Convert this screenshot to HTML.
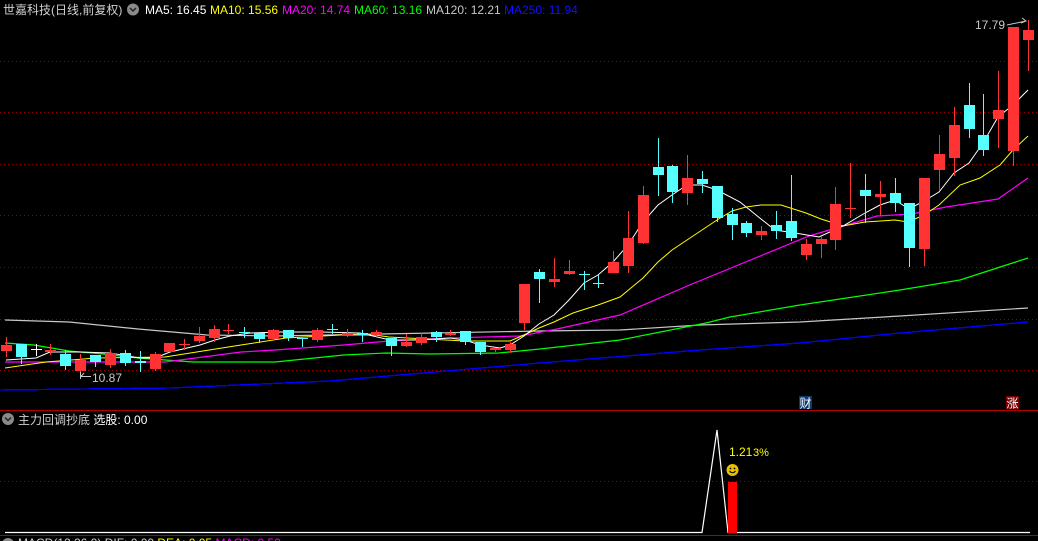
<!DOCTYPE html>
<html><head><meta charset="utf-8"><style>
html,body{margin:0;padding:0;background:#000;width:1038px;height:541px;overflow:hidden}
svg{display:block}
text{font-family:"Liberation Sans","Noto Sans CJK SC",sans-serif;font-size:12px}
</style></head><body>
<svg width="1038" height="541" viewBox="0 0 1038 541" xmlns="http://www.w3.org/2000/svg">
<g stroke="#a00000" stroke-dasharray="1,3" stroke-width="1" shape-rendering="crispEdges">
<line x1="0" y1="61.5" x2="1038" y2="61.5"/><line x1="0" y1="112.5" x2="1038" y2="112.5"/>
<line x1="0" y1="164.5" x2="1038" y2="164.5"/><line x1="0" y1="215.5" x2="1038" y2="215.5"/>
<line x1="0" y1="267.5" x2="1038" y2="267.5"/><line x1="0" y1="319.5" x2="1038" y2="319.5"/>
<line x1="0" y1="370.5" x2="1038" y2="370.5"/><line x1="0" y1="481.5" x2="1038" y2="481.5"/>
</g>
<line x1="0" y1="410.5" x2="1038" y2="410.5" stroke="#b00000"/>
<line x1="0" y1="535.5" x2="1038" y2="535.5" stroke="#b00000"/>
<!-- MA lines -->
<g fill="none" stroke-width="1.2">
<polyline stroke="#0000ff" stroke-width="1.4" shape-rendering="crispEdges" points="0,390 170,388 330,381 540,363 700,350 800,343 900,333 1028,322"/>
<polyline stroke="#c8c8c8" points="5,320 69,322 138,329 207,335 275,336 379,334 540,331 620,330 700,325 800,322 900,316 1028,308"/>
<polyline stroke="#00ff00" points="5,343 34,345 69,351 103,354 138,358 193,362 275,362 344,355 386,353 430,354 499,353 540,349 620,340 706,323 730,317 800,305 900,290 960,280 1028,258"/>
<polyline stroke="#ff00ff" points="5,362 165,362 241,352 275,350 344,345 389,341 448,338 520,336 557,329 620,315 692,284 809,236 877,216 912,214 946,207 998,199 1028,178"/>
<polyline stroke="#ffff00" stroke-width="1" points="5,368 46,362 96,358 165,357 241,345 286,338 341,335 375,335 389,337 465,341 510,341 524,335 539,328 554,322 573,313 598,305 620,297 643,278 658,262 672,250 687,240 702,230 717,220 732,211 746,207 761,205 781,205 806,213 821,219 843,226 865,222 895,220 908,222 924,215 939,205 960,185 980,178 1000,165 1013,150 1028,136"/>
<polyline stroke="#ffffff" stroke-width="1" points="6,360 36,358 50,352 80,352 110,353 140,358 155,358 170,352 200,345 215,340 230,336 250,333 280,332 320,332 360,333 390,340 420,340 450,338 465,340 480,345 500,348 510,345 524,336 539,324 554,315 569,300 584,283 598,275 613,262 628,245 643,222 658,205 672,195 687,185 702,185 717,190 740,202 761,219 775,230 795,233 819,237 843,226 865,213 880,205 895,200 909,209 924,201 939,192 954,173 969,163 983,143 998,117 1013,105 1028,90"/>
</g>
<!-- candles -->
<g shape-rendering="crispEdges">
<g fill="#ff3333" stroke="#ff3333">
<line x1="6.5" y1="337" x2="6.5" y2="357"/><rect x="1" y="345" width="11" height="6" stroke="none"/>
<line x1="50.5" y1="344" x2="50.5" y2="355"/><rect x="45" y="350" width="11" height="2" stroke="none"/>
<line x1="80.5" y1="354" x2="80.5" y2="376"/><rect x="75" y="360" width="11" height="11" stroke="none"/>
<line x1="110.5" y1="349" x2="110.5" y2="368"/><rect x="105" y="353" width="11" height="12" stroke="none"/>
<line x1="155.5" y1="352" x2="155.5" y2="371"/><rect x="150" y="354" width="11" height="15" stroke="none"/>
<line x1="169.5" y1="343" x2="169.5" y2="352"/><rect x="164" y="343" width="11" height="9" stroke="none"/>
<line x1="184.5" y1="339" x2="184.5" y2="350"/><rect x="179" y="344" width="11" height="1" stroke="none"/>
<line x1="199.5" y1="327" x2="199.5" y2="343"/><rect x="194" y="336" width="11" height="5" stroke="none"/>
<line x1="214.5" y1="325" x2="214.5" y2="342"/><rect x="209" y="329" width="11" height="9" stroke="none"/>
<line x1="228.5" y1="324" x2="228.5" y2="334"/><rect x="223" y="330" width="11" height="1" stroke="none"/>
<line x1="273.5" y1="329" x2="273.5" y2="340"/><rect x="268" y="330" width="11" height="9" stroke="none"/>
<line x1="317.5" y1="328" x2="317.5" y2="342"/><rect x="312" y="330" width="11" height="10" stroke="none"/>
<line x1="347.5" y1="329" x2="347.5" y2="337"/><rect x="342" y="333" width="11" height="3" stroke="none"/>
<line x1="376.5" y1="330" x2="376.5" y2="336"/><rect x="371" y="332" width="11" height="3" stroke="none"/>
<line x1="406.5" y1="334" x2="406.5" y2="347"/><rect x="401" y="342" width="11" height="4" stroke="none"/>
<line x1="421.5" y1="333" x2="421.5" y2="345"/><rect x="416" y="337" width="11" height="6" stroke="none"/>
<line x1="450.5" y1="330" x2="450.5" y2="336"/><rect x="445" y="333" width="11" height="2" stroke="none"/>
<line x1="495.5" y1="348" x2="495.5" y2="352"/><rect x="490" y="348" width="11" height="2" stroke="none"/>
<line x1="510.5" y1="342" x2="510.5" y2="353"/><rect x="505" y="344" width="11" height="6" stroke="none"/>
<line x1="524.5" y1="284" x2="524.5" y2="330"/><rect x="519" y="284" width="11" height="39" stroke="none"/>
<line x1="554.5" y1="258" x2="554.5" y2="287"/><rect x="549" y="279" width="11" height="3" stroke="none"/>
<line x1="569.5" y1="260" x2="569.5" y2="275"/><rect x="564" y="271" width="11" height="3" stroke="none"/>
<line x1="613.5" y1="251" x2="613.5" y2="273"/><rect x="608" y="262" width="11" height="11" stroke="none"/>
<line x1="628.5" y1="211" x2="628.5" y2="273"/><rect x="623" y="238" width="11" height="28" stroke="none"/>
<line x1="643.5" y1="186" x2="643.5" y2="244"/><rect x="638" y="195" width="11" height="48" stroke="none"/>
<line x1="687.5" y1="155" x2="687.5" y2="205"/><rect x="682" y="178" width="11" height="15" stroke="none"/>
<line x1="761.5" y1="226" x2="761.5" y2="240"/><rect x="756" y="231" width="11" height="4" stroke="none"/>
<line x1="806.5" y1="239" x2="806.5" y2="260"/><rect x="801" y="244" width="11" height="11" stroke="none"/>
<line x1="821.5" y1="236" x2="821.5" y2="258"/><rect x="816" y="239" width="11" height="5" stroke="none"/>
<line x1="835.5" y1="187" x2="835.5" y2="250"/><rect x="830" y="204" width="11" height="36" stroke="none"/>
<line x1="850.5" y1="163" x2="850.5" y2="218"/><rect x="845" y="208" width="11" height="1" stroke="none"/>
<line x1="880.5" y1="181" x2="880.5" y2="216"/><rect x="875" y="194" width="11" height="3" stroke="none"/>
<line x1="924.5" y1="178" x2="924.5" y2="266"/><rect x="919" y="178" width="11" height="71" stroke="none"/>
<line x1="939.5" y1="135" x2="939.5" y2="190"/><rect x="934" y="154" width="11" height="16" stroke="none"/>
<line x1="954.5" y1="107" x2="954.5" y2="176"/><rect x="949" y="125" width="11" height="33" stroke="none"/>
<line x1="998.5" y1="71" x2="998.5" y2="148"/><rect x="993" y="110" width="11" height="9" stroke="none"/>
<line x1="1013.5" y1="27" x2="1013.5" y2="166"/><rect x="1008" y="27" width="11" height="124" stroke="none"/>
<line x1="1028.5" y1="20" x2="1028.5" y2="71"/><rect x="1023" y="30" width="11" height="10" stroke="none"/>
</g>
<g fill="#55ffff" stroke="#55ffff">
<line x1="21.5" y1="344" x2="21.5" y2="364"/><rect x="16" y="344" width="11" height="13" stroke="none"/>
<line x1="65.5" y1="350" x2="65.5" y2="370"/><rect x="60" y="354" width="11" height="12" stroke="none"/>
<line x1="95.5" y1="355" x2="95.5" y2="367"/><rect x="90" y="355" width="11" height="7" stroke="none"/>
<line x1="125.5" y1="350" x2="125.5" y2="366"/><rect x="120" y="353" width="11" height="10" stroke="none"/>
<line x1="140.5" y1="351" x2="140.5" y2="372"/><rect x="135" y="361" width="11" height="2" stroke="none"/>
<line x1="244.5" y1="327" x2="244.5" y2="338"/><rect x="239" y="332" width="11" height="1" stroke="none"/>
<line x1="259.5" y1="333" x2="259.5" y2="343"/><rect x="254" y="333" width="11" height="6" stroke="none"/>
<line x1="288.5" y1="330" x2="288.5" y2="341"/><rect x="283" y="330" width="11" height="8" stroke="none"/>
<line x1="302.5" y1="338" x2="302.5" y2="347"/><rect x="297" y="338" width="11" height="1" stroke="none"/>
<line x1="332.5" y1="324" x2="332.5" y2="334"/><rect x="327" y="329" width="11" height="1" stroke="none"/>
<line x1="362.5" y1="330" x2="362.5" y2="342"/><rect x="357" y="333" width="11" height="2" stroke="none"/>
<line x1="391.5" y1="338" x2="391.5" y2="356"/><rect x="386" y="338" width="11" height="8" stroke="none"/>
<line x1="436.5" y1="331" x2="436.5" y2="342"/><rect x="431" y="332" width="11" height="5" stroke="none"/>
<line x1="465.5" y1="331" x2="465.5" y2="345"/><rect x="460" y="331" width="11" height="11" stroke="none"/>
<line x1="480.5" y1="342" x2="480.5" y2="355"/><rect x="475" y="342" width="11" height="10" stroke="none"/>
<line x1="539.5" y1="269" x2="539.5" y2="303"/><rect x="534" y="272" width="11" height="7" stroke="none"/>
<line x1="584.5" y1="271" x2="584.5" y2="290"/><rect x="579" y="274" width="11" height="1" stroke="none"/>
<line x1="598.5" y1="275" x2="598.5" y2="288"/><rect x="593" y="283" width="11" height="1" stroke="none"/>
<line x1="658.5" y1="138" x2="658.5" y2="196"/><rect x="653" y="167" width="11" height="8" stroke="none"/>
<line x1="672.5" y1="165" x2="672.5" y2="203"/><rect x="667" y="166" width="11" height="26" stroke="none"/>
<line x1="702.5" y1="171" x2="702.5" y2="193"/><rect x="697" y="179" width="11" height="5" stroke="none"/>
<line x1="717.5" y1="186" x2="717.5" y2="222"/><rect x="712" y="186" width="11" height="32" stroke="none"/>
<line x1="732.5" y1="208" x2="732.5" y2="240"/><rect x="727" y="214" width="11" height="11" stroke="none"/>
<line x1="746.5" y1="221" x2="746.5" y2="237"/><rect x="741" y="223" width="11" height="10" stroke="none"/>
<line x1="776.5" y1="211" x2="776.5" y2="239"/><rect x="771" y="225" width="11" height="6" stroke="none"/>
<line x1="791.5" y1="175" x2="791.5" y2="241"/><rect x="786" y="221" width="11" height="17" stroke="none"/>
<line x1="865.5" y1="174" x2="865.5" y2="223"/><rect x="860" y="190" width="11" height="6" stroke="none"/>
<line x1="895.5" y1="178" x2="895.5" y2="212"/><rect x="890" y="193" width="11" height="10" stroke="none"/>
<line x1="909.5" y1="203" x2="909.5" y2="267"/><rect x="904" y="203" width="11" height="45" stroke="none"/>
<line x1="969.5" y1="83" x2="969.5" y2="138"/><rect x="964" y="105" width="11" height="24" stroke="none"/>
<line x1="983.5" y1="94" x2="983.5" y2="156"/><rect x="978" y="135" width="11" height="15" stroke="none"/>
</g>
<g fill="#fff" stroke="#fff">
<line x1="36.5" y1="344" x2="36.5" y2="356"/><rect x="31" y="349" width="11" height="1" stroke="none"/>
</g>
</g>
<!-- annotations -->
<text x="92" y="382" fill="#c8c8c8">10.87</text>
<path d="M80.5,372 L80.5,379 M80,376.5 L91,376.5 M80.5,377 L84,373" stroke="#c8c8c8" fill="none"/>
<text x="975" y="29" fill="#c8c8c8">17.79</text>
<path d="M1007,25 L1026,21 M1022,18 L1026,21 L1021,23" stroke="#c8c8c8" fill="none"/>
<!-- header -->
<text x="3" y="14" fill="#d0d0d0">世嘉科技(日线,前复权)</text>
<circle cx="133" cy="9.5" r="6" fill="#8a8a8a"/>
<path d="M130,8 L133,11 L136,8" stroke="#222" stroke-width="1.5" fill="none"/>
<text x="145" y="14" fill="#ffffff">MA5: 16.45</text>
<text x="210" y="14" fill="#ffff00">MA10: 15.56</text>
<text x="282" y="14" fill="#ff00ff">MA20: 14.74</text>
<text x="354" y="14" fill="#00ff00">MA60: 13.16</text>
<text x="426" y="14" fill="#c8c8c8">MA120: 12.21</text>
<text x="504" y="14" fill="#1010ff">MA250: 11.94</text>
<!-- markers -->
<rect x="799" y="396" width="13" height="13" fill="#0b3b6e"/>
<text x="799.5" y="407.5" fill="#fff" style="font-size:12px">财</text>
<rect x="1006" y="396" width="13" height="13" fill="#7a0000"/>
<text x="1006.5" y="407.5" fill="#fff" style="font-size:12px">涨</text>
<!-- lower panel -->
<circle cx="8" cy="419" r="6" fill="#8a8a8a"/>
<path d="M5,417.5 L8,420.5 L11,417.5" stroke="#222" stroke-width="1.5" fill="none"/>
<text x="18" y="424" fill="#d0d0d0">主力回调抄底 <tspan fill="#fff">选股: 0.00</tspan></text>
<polyline points="5,532.5 702,532.5 717,430 728,532.5 1030,532.5" fill="none" stroke="#fff" stroke-width="1.2"/>
<rect x="728" y="482" width="9" height="51" fill="#ff0000"/>
<text x="729" y="456" fill="#ffff00">1.21</text>
<text x="753" y="456" fill="#ffff00" style="font-size:11px">3%</text>
<circle cx="732.5" cy="470" r="6" fill="#e8c000"/>
<circle cx="730.5" cy="468.5" r="0.9" fill="#000"/><circle cx="734.5" cy="468.5" r="0.9" fill="#000"/>
<path d="M729.5,471 Q732.5,474.5 735.5,471" stroke="#000" fill="none"/>
<circle cx="8" cy="544" r="6" fill="#8a8a8a"/>
<text x="18" y="547" fill="#d0d0d0">MACD(12,26,9) DIF: 0.00 <tspan fill="#ffff00">DEA: 0.05</tspan> <tspan fill="#ff00ff">MACD: 0.50</tspan></text>
</svg>
</body></html>
